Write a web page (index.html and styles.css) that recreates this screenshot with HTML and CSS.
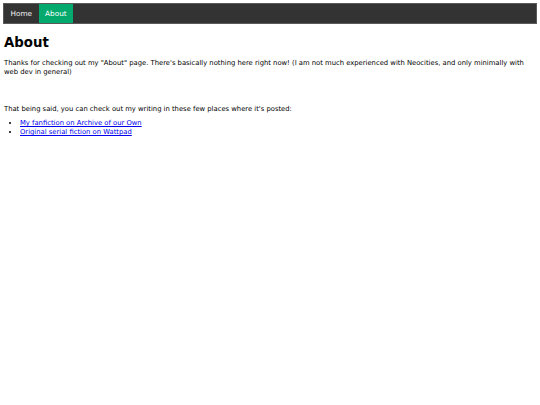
FILE: index.html
```html
<!DOCTYPE html>
<html>
<head>
<meta charset="utf-8">
<title>About</title>
<link rel="stylesheet" href="styles.css">
</head>
<body>
<nav class="topnav">
  <a class="nav-link" href="#">Home</a>
  <a class="nav-link active" href="#">About</a>
</nav>
<h1 class="title">About</h1>
<p class="intro">Thanks for checking out my "About" page. There's basically nothing here right now! (I am not much experienced with Neocities, and only minimally with web dev in general)</p>
<p class="lead">That being said, you can check out my writing in these few places where it's posted:</p>
<ul class="links">
  <li><a href="#">My fanfiction on Archive of our Own</a></li>
  <li><a href="#">Original serial fiction on Wattpad</a></li>
</ul>
</body>
</html>
```
FILE: styles.css
```css
body {
  margin: 3px;
  font-family: "DejaVu Sans", Verdana, sans-serif;
  font-size: 6.8px;
  line-height: 9px;
  color: #000;
  background: #fff;
}
.topnav {
  display: flex;
  background: #333;
  height: 21px;
  border: 1px solid #5a5a5a;
  box-sizing: border-box;
}
.nav-link {
  display: flex;
  align-items: center;
  padding: 0 6.5px;
  color: #f2f2f2;
  text-decoration: none;
  font-size: 7.3px;
}
.nav-link.active {
  background: #04aa6d;
  color: #fff;
}
.title {
  font-size: 13.3px;
  line-height: 16px;
  margin: 11px 0 8px 1px;
}
.intro {
  margin: 0 0 28px 1px;
}
.lead {
  margin: 0 0 5px 1px;
}
.links {
  margin: 0;
  padding-left: 17px;
}
.links a {
  color: #0000ee;
}
```
